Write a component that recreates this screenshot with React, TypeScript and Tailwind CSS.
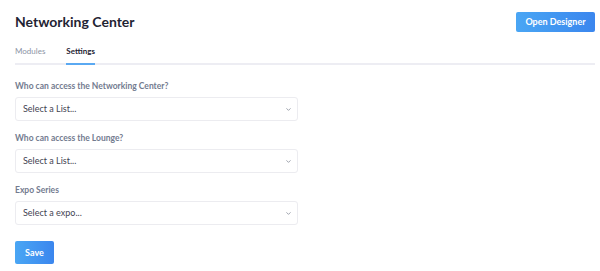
import { ChevronDown } from 'lucide-react'

const font = { fontFamily: 'Lato, "Noto Sans", sans-serif' }

function SelectField({ label, placeholder }: { label: string; placeholder: string }) {
  return (
    <div className="flex flex-col">
      <label className="text-[8.5px] font-bold text-[#737b8f] leading-[12px] mb-[5px]">{label}</label>
      <div className="w-[283px] h-[24px] flex items-center justify-between border border-[#ececf0] rounded-[3px] bg-white pl-[7px] pr-[5px]">
        <span className="text-[9px] text-[#3f4452] leading-[12px]">{placeholder}</span>
        <ChevronDown className="w-[7px] h-[7px] text-[#7b8190]" strokeWidth={2.5} />
      </div>
    </div>
  )
}

export default function App() {
  return (
    <div className="w-[600px] h-[271px] bg-white px-[15px] pt-[12px] overflow-hidden" style={font}>
      <div className="flex items-start justify-between w-[580px]">
        <h1 className="text-[14px] font-bold text-[#1f2433] leading-[18px] mt-[1px]">Networking Center</h1>
        <button className="h-[20px] w-[79px] rounded-[2px] bg-gradient-to-r from-[#4aa6f4] to-[#3b86ee] text-white text-[9px] font-bold leading-[20px]">
          Open Designer
        </button>
      </div>

      <div className="flex gap-[21px] mt-[13px] w-[580px] border-b-2 border-[#ededf3] text-[8px] leading-[12px]">
        <div className="text-[#8b93a5] pb-[6px]">Modules</div>
        <div className="text-[#1f2433] font-bold pb-[6px] -mb-[2px] border-b-2 border-[#5aa9f2]">Settings</div>
      </div>

      <div className="flex flex-col gap-[11px] mt-[15px]">
        <SelectField label="Who can access the Networking Center?" placeholder="Select a List..." />
        <SelectField label="Who can access the Lounge?" placeholder="Select a List..." />
        <SelectField label="Expo Series" placeholder="Select a expo..." />
      </div>

      <button className="mt-[16px] w-[39px] h-[23px] rounded-[2px] bg-gradient-to-r from-[#4aa6f4] to-[#3b86ee] text-white text-[9px] font-bold">
        Save
      </button>
    </div>
  )
}
